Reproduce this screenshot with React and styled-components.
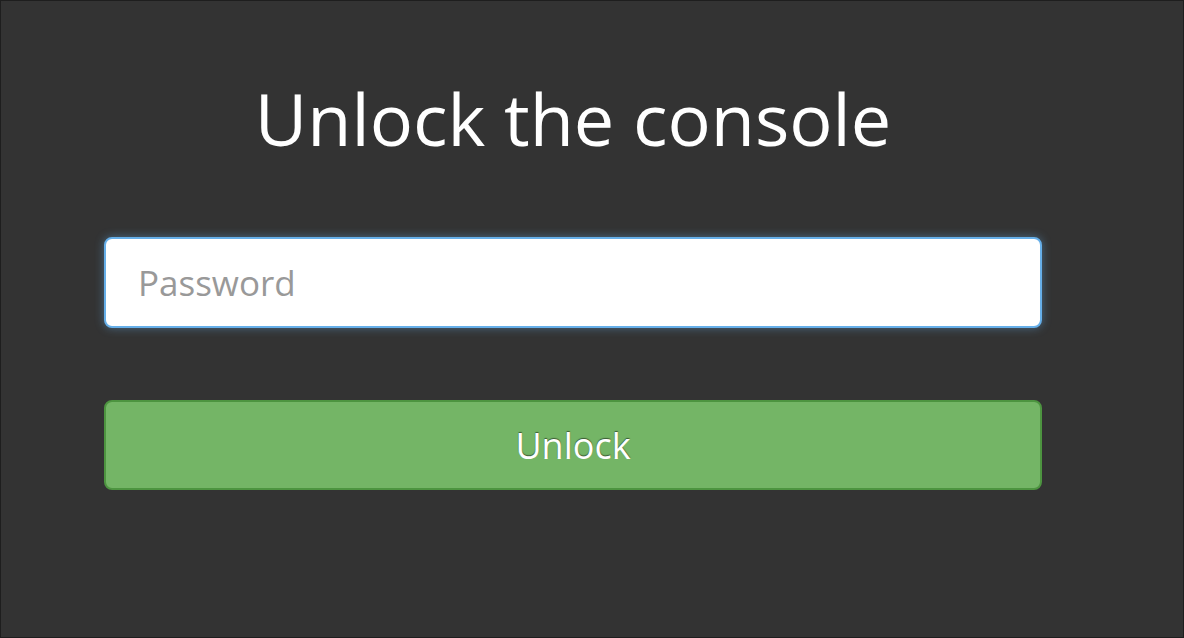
import React from "react";
import styled, { createGlobalStyle } from "styled-components";

const GlobalStyle = createGlobalStyle`
    html, body {
        margin: 0;
        padding: 0;
        background: #333333;
    }
    body {
        font-family: "Open Sans", "Noto Sans", sans-serif;
    }
`

const Page = styled.div`
    box-sizing: border-box;
    width: 1184px;
    height: 638px;
    border: 1px solid #1e1e1e;
    background: #333333;
    padding: 78px 0 0 103px;
`

const Panel = styled.form`
    display: flex;
    flex-direction: column;
    width: 938px;
`

const Title = styled.h1`
    margin: 0;
    font-size: 72px;
    font-weight: 400;
    line-height: 79px;
    color: #ffffff;
    text-align: center;
`

const PasswordInput = styled.input`
    box-sizing: border-box;
    margin-top: 79px;
    height: 91px;
    width: 100%;
    padding: 0 32px;
    font-family: "Open Sans", sans-serif;
    font-size: 35px;
    color: #555555;
    caret-color: #333;
    background: #ffffff;
    border: 2px solid #66afe9;
    border-radius: 8px;
    outline: none;
    box-shadow: 0 0 10px rgba(102, 175, 233, 0.45);

    &::placeholder {
        color: #999999;
    }
`

const UnlockButton = styled.button`
    box-sizing: border-box;
    margin-top: 72px;
    height: 90px;
    width: 100%;
    font-family: "Open Sans", sans-serif;
    font-size: 36px;
    color: #ffffff;
    text-shadow: 0 -1px 1px rgba(0, 0, 0, 0.5);
    background: #74b566;
    border: 2px solid #4d9440;
    border-radius: 8px;
    cursor: pointer;
`

const App = () => {
    return (
        <Page>
            <GlobalStyle />
            <Panel onSubmit={(e) => e.preventDefault()}>
                <Title>Unlock the console</Title>
                <PasswordInput type="password" placeholder="Password" autoFocus />
                <UnlockButton type="submit">Unlock</UnlockButton>
            </Panel>
        </Page>
    )
}

export default App;
